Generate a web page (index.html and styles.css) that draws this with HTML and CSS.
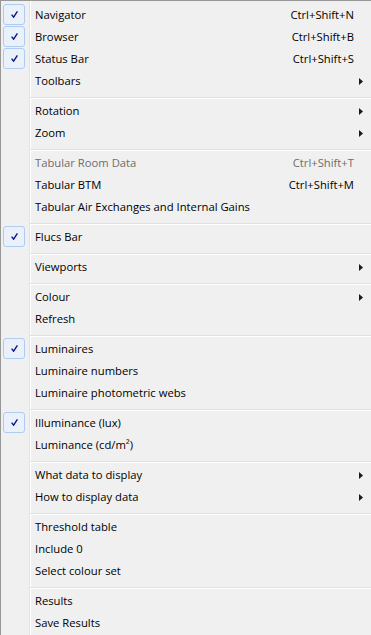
FILE: index.html
```html
<!DOCTYPE html>
<html lang="en">
<head>
    <meta charset="UTF-8">
    <meta name="viewport" content="width=device-width, initial-scale=1.0">
    <title>View menu</title>
    <link rel="stylesheet" href="styles.css">
</head>
<body>
    <ul class="menu">
        <li class="item checked"><span class="gutter"><span class="check"><svg viewBox="0 0 7 7" width="7" height="7"><path d="M0.6 3.6 L2.6 6.2 L6.4 0.4" /></svg></span></span><span class="label">Navigator</span><span class="shortcut">Ctrl+Shift+N</span><span class="arrow"></span></li>
        <li class="item checked"><span class="gutter"><span class="check"><svg viewBox="0 0 7 7" width="7" height="7"><path d="M0.6 3.6 L2.6 6.2 L6.4 0.4" /></svg></span></span><span class="label">Browser</span><span class="shortcut">Ctrl+Shift+B</span><span class="arrow"></span></li>
        <li class="item checked"><span class="gutter"><span class="check"><svg viewBox="0 0 7 7" width="7" height="7"><path d="M0.6 3.6 L2.6 6.2 L6.4 0.4" /></svg></span></span><span class="label">Status Bar</span><span class="shortcut">Ctrl+Shift+S</span><span class="arrow"></span></li>
        <li class="item"><span class="gutter"></span><span class="label">Toolbars</span><span class="arrow"><svg viewBox="0 0 4 7" width="4" height="7"><path d="M0 0 L4 3.5 L0 7 Z" /></svg></span></li>
        <li class="sep"></li>
        <li class="item"><span class="gutter"></span><span class="label">Rotation</span><span class="arrow"><svg viewBox="0 0 4 7" width="4" height="7"><path d="M0 0 L4 3.5 L0 7 Z" /></svg></span></li>
        <li class="item"><span class="gutter"></span><span class="label">Zoom</span><span class="arrow"><svg viewBox="0 0 4 7" width="4" height="7"><path d="M0 0 L4 3.5 L0 7 Z" /></svg></span></li>
        <li class="sep"></li>
        <li class="item disabled"><span class="gutter"></span><span class="label">Tabular Room Data</span><span class="shortcut">Ctrl+Shift+T</span><span class="arrow"></span></li>
        <li class="item"><span class="gutter"></span><span class="label">Tabular BTM</span><span class="shortcut">Ctrl+Shift+M</span><span class="arrow"></span></li>
        <li class="item"><span class="gutter"></span><span class="label">Tabular Air Exchanges and Internal Gains</span><span class="arrow"></span></li>
        <li class="sep"></li>
        <li class="item checked"><span class="gutter"><span class="check"><svg viewBox="0 0 7 7" width="7" height="7"><path d="M0.6 3.6 L2.6 6.2 L6.4 0.4" /></svg></span></span><span class="label">Flucs Bar</span><span class="arrow"></span></li>
        <li class="sep"></li>
        <li class="item"><span class="gutter"></span><span class="label">Viewports</span><span class="arrow"><svg viewBox="0 0 4 7" width="4" height="7"><path d="M0 0 L4 3.5 L0 7 Z" /></svg></span></li>
        <li class="sep"></li>
        <li class="item"><span class="gutter"></span><span class="label">Colour</span><span class="arrow"><svg viewBox="0 0 4 7" width="4" height="7"><path d="M0 0 L4 3.5 L0 7 Z" /></svg></span></li>
        <li class="item"><span class="gutter"></span><span class="label">Refresh</span><span class="arrow"></span></li>
        <li class="sep"></li>
        <li class="item checked"><span class="gutter"><span class="check"><svg viewBox="0 0 7 7" width="7" height="7"><path d="M0.6 3.6 L2.6 6.2 L6.4 0.4" /></svg></span></span><span class="label">Luminaires</span><span class="arrow"></span></li>
        <li class="item"><span class="gutter"></span><span class="label">Luminaire numbers</span><span class="arrow"></span></li>
        <li class="item"><span class="gutter"></span><span class="label">Luminaire photometric webs</span><span class="arrow"></span></li>
        <li class="sep"></li>
        <li class="item checked"><span class="gutter"><span class="check"><svg viewBox="0 0 7 7" width="7" height="7"><path d="M0.6 3.6 L2.6 6.2 L6.4 0.4" /></svg></span></span><span class="label">Illuminance (lux)</span><span class="arrow"></span></li>
        <li class="item"><span class="gutter"></span><span class="label">Luminance (cd/m²)</span><span class="arrow"></span></li>
        <li class="sep"></li>
        <li class="item"><span class="gutter"></span><span class="label">What data to display</span><span class="arrow"><svg viewBox="0 0 4 7" width="4" height="7"><path d="M0 0 L4 3.5 L0 7 Z" /></svg></span></li>
        <li class="item"><span class="gutter"></span><span class="label">How to display data</span><span class="arrow"><svg viewBox="0 0 4 7" width="4" height="7"><path d="M0 0 L4 3.5 L0 7 Z" /></svg></span></li>
        <li class="sep"></li>
        <li class="item"><span class="gutter"></span><span class="label">Threshold table</span><span class="arrow"></span></li>
        <li class="item"><span class="gutter"></span><span class="label">Include 0</span><span class="arrow"></span></li>
        <li class="item"><span class="gutter"></span><span class="label">Select colour set</span><span class="arrow"></span></li>
        <li class="sep"></li>
        <li class="item"><span class="gutter"></span><span class="label">Results</span><span class="arrow"></span></li>
        <li class="item"><span class="gutter"></span><span class="label">Save Results</span><span class="arrow"></span></li>
    </ul>
</body>
</html>
```

FILE: styles.css
```css
/* Windows 7 style context menu */
html, body {
    margin: 0;
    background-color: #f0f0f0;
}

.menu {
    list-style: none;
    margin: 0;
    padding: 3px 0 0 0;
    width: 370px;
    height: 631px;
    overflow: hidden;
    border-top: 1px solid #979797;
    border-left: 1px solid #979797;
    /* gutter line: grey then white */
    background-color: #f0f0f0;
    background-image: linear-gradient(to right,
        transparent 28px, #e2e3e3 28px, #e2e3e3 29px,
        #ffffff 29px, #ffffff 30px, transparent 30px);
    font-family: "Open Sans", "Noto Sans", sans-serif;
    font-size: 11.25px;
    color: #000000;
}

.item {
    display: flex;
    align-items: center;
    height: 22px;
    line-height: 22px;
}

.gutter {
    flex: 0 0 34px;
    height: 22px;
    display: flex;
    align-items: flex-start;
}

.check {
    box-sizing: border-box;
    width: 22px;
    height: 21px;
    margin-left: 2px;
    border: 1px solid #aecbf0;
    border-radius: 3px;
    background-color: #eaf1fb;
    display: flex;
    align-items: center;
    justify-content: center;
}

.check svg {
    display: block;
    fill: none;
    stroke: #0b1a8c;
    stroke-width: 1.4;
}

.label {
    flex: 1;
    white-space: nowrap;
}

.shortcut {
    white-space: nowrap;
    text-align: right;
}

.arrow {
    flex: 0 0 17px;
    display: flex;
    align-items: center;
    padding-left: 5px;
    box-sizing: border-box;
}

.arrow svg {
    display: block;
    fill: #1a1a1a;
}

.disabled {
    color: #6d6d6d;
}

.sep {
    height: 0;
    margin: 5px 0 1px 29px;
    border-top: 1px solid #e0e0e0;
    border-bottom: 1px solid #ffffff;
}
```
